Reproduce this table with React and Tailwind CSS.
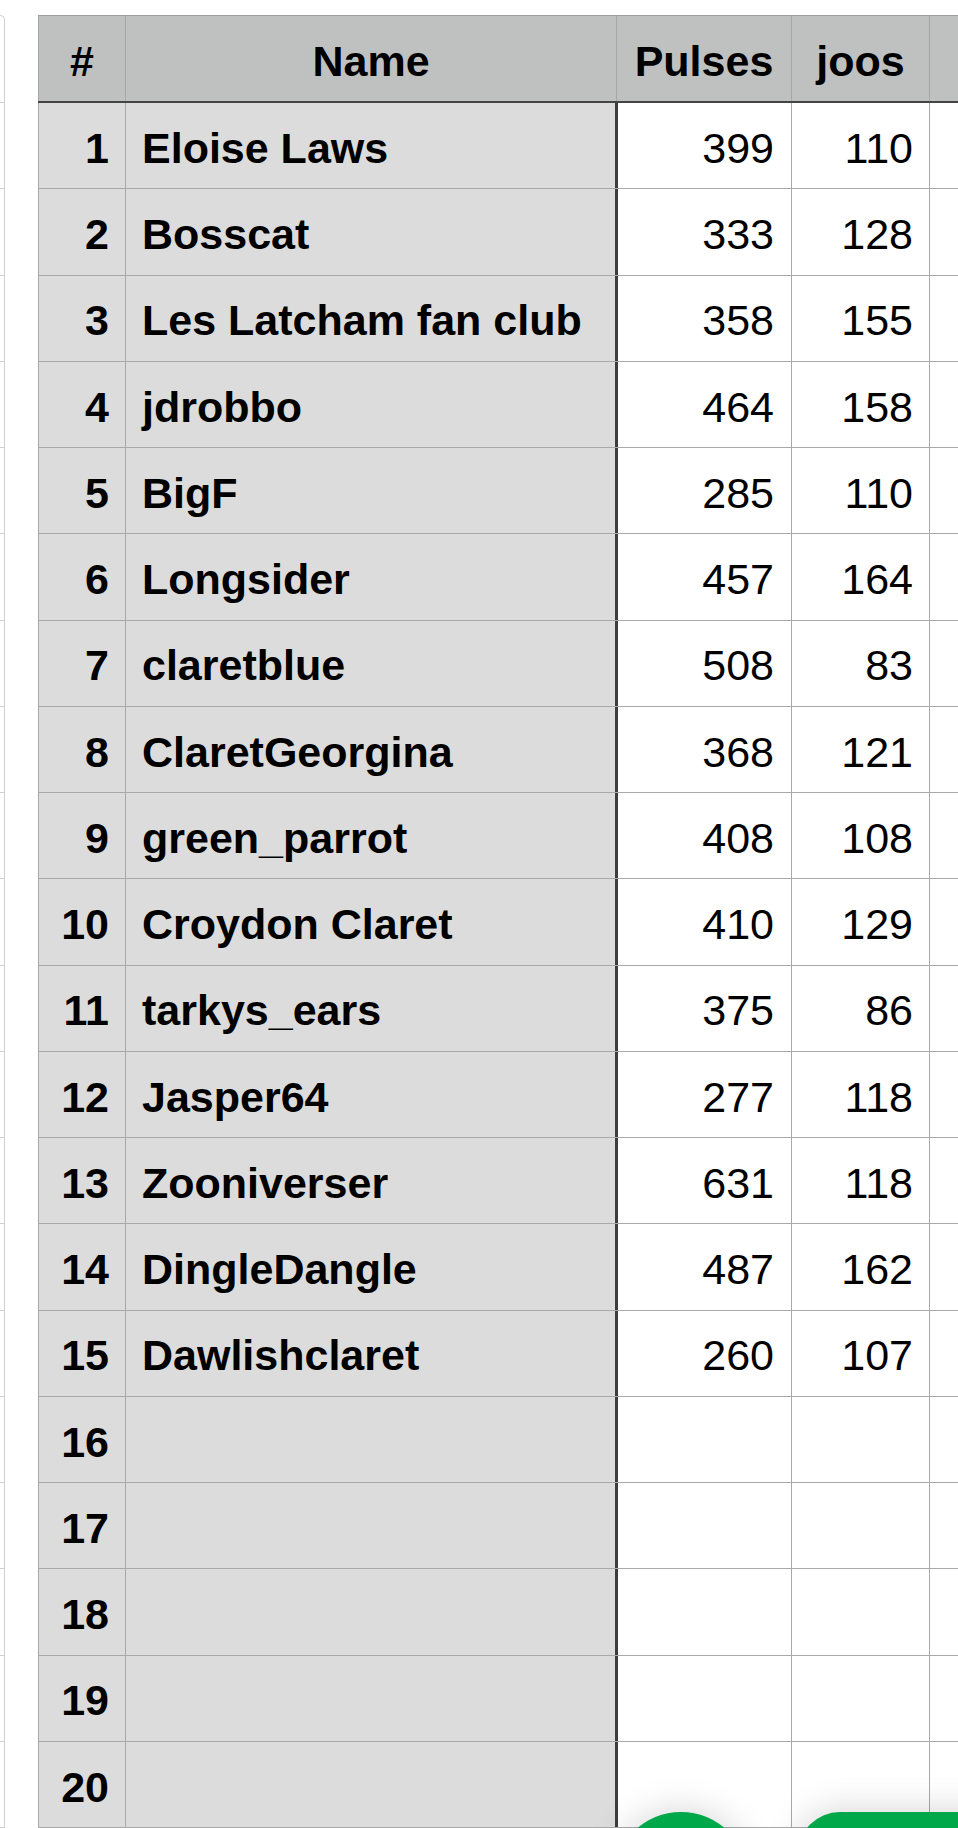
import React from "react";

const rows = [
  ["Eloise Laws", 399, 110],
  ["Bosscat", 333, 128],
  ["Les Latcham fan club", 358, 155],
  ["jdrobbo", 464, 158],
  ["BigF", 285, 110],
  ["Longsider", 457, 164],
  ["claretblue", 508, 83],
  ["ClaretGeorgina", 368, 121],
  ["green_parrot", 408, 108],
  ["Croydon Claret", 410, 129],
  ["tarkys_ears", 375, 86],
  ["Jasper64", 277, 118],
  ["Zooniverser", 631, 118],
  ["DingleDangle", 487, 162],
  ["Dawlishclaret", 260, 107],
  ["", "", ""],
  ["", "", ""],
  ["", "", ""],
  ["", "", ""],
  ["", "", ""],
];

function HeaderRow() {
  return (
    <div className="flex h-[88px] border-t border-b-2 border-t-[#9e9e9e] border-b-[#444444] bg-[#bfc1c0] font-bold">
      <div className="w-[88px] shrink-0 flex items-center justify-center pt-[5px] border-l border-r border-[#a6a6a6]">#</div>
      <div className="w-[491px] shrink-0 flex items-center justify-center pt-[5px] border-r border-[#a6a6a6]">Name</div>
      <div className="w-[175px] shrink-0 flex items-center justify-center pt-[5px] border-r border-[#a6a6a6]">Pulses</div>
      <div className="w-[138px] shrink-0 flex items-center justify-center pt-[5px] border-r border-[#a6a6a6]">joos</div>
      <div className="flex-1" />
    </div>
  );
}

function BodyRow({ n, name, pulses, joos }) {
  return (
    <div className="flex h-[86.25px] border-b border-[#a9a9a9]">
      <div className="w-[88px] shrink-0 flex items-center justify-end pt-[5px] pr-[16px] border-l border-r border-[#a9a9a9] bg-[#dcdcdc] font-bold">
        {n}
      </div>
      <div className="w-[492px] shrink-0 flex items-center pt-[5px] pl-[16px] border-r-[3px] border-[#3d3d3d] bg-[#dcdcdc] font-bold whitespace-nowrap">
        {name}
      </div>
      <div className="w-[174px] shrink-0 flex items-center justify-end pt-[5px] pr-[17px] border-r border-[#a9a9a9] bg-white">
        {pulses}
      </div>
      <div className="w-[138px] shrink-0 flex items-center justify-end pt-[5px] pr-[16px] border-r border-[#a9a9a9] bg-white">
        {joos}
      </div>
      <div className="flex-1 bg-white" />
    </div>
  );
}

export default function App() {
  return (
    <div
      className="relative h-[1828px] w-full overflow-hidden bg-white text-black text-[43px]"
      style={{ fontFamily: '"Liberation Sans", Arial, sans-serif' }}
    >
      <div className="flex">
        {/* neighbouring sheet edge */}
        <div className="w-[5px] shrink-0 mt-[15px] border-t border-r border-[#cfcfcf] rounded-tr-[8px]">
          <div className="h-[87px] border-b border-[#cfcfcf]" />
          {rows.map((_, i) => (
            <div key={i} className="h-[86.25px] border-b border-[#cfcfcf]" />
          ))}
        </div>

        <div className="ml-[33px] mt-[15px] flex-1 min-w-0">
          <HeaderRow />
          {rows.map((r, i) => (
            <BodyRow key={i} n={i + 1} name={r[0]} pulses={r[1]} joos={r[2]} />
          ))}
        </div>
      </div>

      {/* floating buttons */}
      <div className="absolute left-[614px] top-[1812px] w-[134px] h-[134px] rounded-full bg-[#00a84a] shadow-[0_0_36px_rgba(0,0,0,0.18)]" />
      <div className="absolute left-[798px] top-[1812px] w-[240px] h-[84px] rounded-[42px] bg-[#00a84a] shadow-[0_0_36px_rgba(0,0,0,0.18)]" />
    </div>
  );
}
